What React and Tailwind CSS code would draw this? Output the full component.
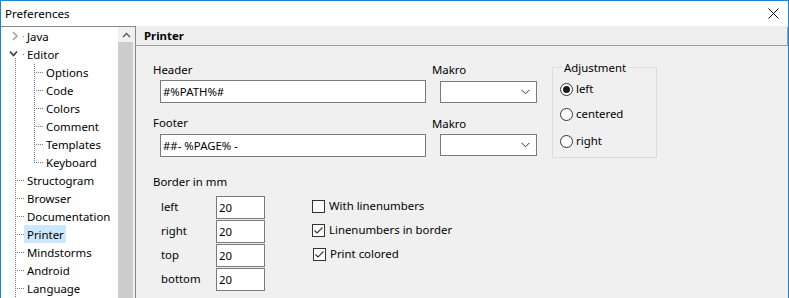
import React from "react";

const DOT = "#7a7a7a";

function dotsV(x, y1, y2, k) {
  const r = [];
  for (let y = y1; y <= y2; y += 2) r.push(<rect key={k + "v" + y} x={x} y={y} width="1" height="1" />);
  return r;
}
function dotsH(y, x1, x2, k) {
  const r = [];
  for (let x = x1; x <= x2; x += 2) r.push(<rect key={k + "h" + x} x={x} y={y} width="1" height="1" />);
  return r;
}

function TreeRow({ kind, label, selected }) {
  const child = kind === "child" || kind === "childLast";
  const w = child ? 42 : 23;
  let parts = [];
  if (kind === "java") {
    parts.push(<rect key="d" x={22} y={9} width="1" height="1" />);
  } else if (kind === "editor") {
    parts.push(<rect key="d" x={22} y={9} width="1" height="1" />);
    parts.push(...dotsV(14, 13, 17, "e"));
  } else if (kind === "top") {
    parts.push(...dotsV(14, 1, 17, "t"));
    parts.push(...dotsH(9, 16, 22, "t"));
  } else if (kind === "child") {
    parts.push(...dotsV(14, 1, 17, "c"));
    parts.push(...dotsV(33, 1, 17, "c2"));
    parts.push(...dotsH(9, 35, 41, "c"));
  } else if (kind === "childLast") {
    parts.push(...dotsV(14, 1, 17, "c"));
    parts.push(...dotsV(33, 1, 9, "c2"));
    parts.push(...dotsH(9, 35, 41, "c"));
  }
  return (
    <div className="flex h-[18px] items-center">
      <svg width={w} height="18" className="shrink-0" fill={DOT}>
        {parts}
        {kind === "java" && (
          <polyline points="12,5 16,9 12,13" fill="none" stroke="#a6a6a6" strokeWidth="1.7" />
        )}
        {kind === "editor" && (
          <polyline points="9,6.5 12.5,10.5 16,6.5" fill="none" stroke="#404040" strokeWidth="1.7" />
        )}
      </svg>
      <span
        className={
          "h-[18px] leading-[19px] pl-[3px] pr-[2px] text-black " +
          (selected ? "bg-[#cce8ff]" : "")
        }
      >
        {label}
      </span>
    </div>
  );
}

function TextBox({ value, className }) {
  return (
    <div
      className={
        "bg-white border border-[#7a7a7a] flex items-center pl-[2px] text-black leading-[16px] " + className
      }
    >
      {value}
    </div>
  );
}

function Select({ className }) {
  return (
    <div className={"bg-white border border-[#7a7a7a] flex items-center justify-end pr-[6px] " + className}>
      <svg width="9" height="6" viewBox="0 0 9 6">
        <polyline points="0.5,0.8 4.5,4.8 8.5,0.8" fill="none" stroke="#333" strokeWidth="1" />
      </svg>
    </div>
  );
}

function Radio({ checked, label, className }) {
  return (
    <div className={"flex items-center h-[16px] " + className}>
      <div className="w-[13px] h-[13px] rounded-full border border-[#333] bg-white flex items-center justify-center">
        {checked && <div className="w-[7px] h-[7px] rounded-full bg-[#1a1a1a]" />}
      </div>
      <span className="ml-[3px] leading-[16px]">{label}</span>
    </div>
  );
}

function Check({ checked, label, className }) {
  return (
    <div className={"flex items-center h-[24px] " + className}>
      <div className="w-[13px] h-[13px] border border-[#333] bg-white flex items-center justify-center">
        {checked && (
          <svg width="11" height="11" viewBox="0 0 11 11">
            <polyline points="1.5,5.5 4,8 9.5,2.5" fill="none" stroke="#333" strokeWidth="1.1" />
          </svg>
        )}
      </div>
      <span className="ml-[4px] leading-[16px]">{label}</span>
    </div>
  );
}

export default function App() {
  const rows = [
    ["java", "Java"],
    ["editor", "Editor"],
    ["child", "Options"],
    ["child", "Code"],
    ["child", "Colors"],
    ["child", "Comment"],
    ["child", "Templates"],
    ["childLast", "Keyboard"],
    ["top", "Structogram"],
    ["top", "Browser"],
    ["top", "Documentation"],
    ["top", "Printer", true],
    ["top", "Mindstorms"],
    ["top", "Android"],
    ["top", "Language"],
  ];
  return (
    <div
      className="w-[789px] h-[298px] overflow-hidden border-l border-t border-r border-[#1883d7] bg-[#f0f0f0] flex flex-col text-[11.4px] text-black"
      style={{ fontFamily: '"Noto Sans", "Liberation Sans", sans-serif' }}
    >
      {/* Title bar */}
      <div className="h-[25px] shrink-0 bg-white flex items-center justify-between pl-[4px] pr-[9px]">
        <span className="leading-[16px] text-[11.6px]">Preferences</span>
        <svg width="11" height="11" viewBox="0 0 11 11">
          <path d="M0.5 0.5 L10.5 10.5 M10.5 0.5 L0.5 10.5" stroke="#111" strokeWidth="1" />
        </svg>
      </div>
      {/* Body */}
      <div className="flex flex-1 min-h-0">
        {/* Tree */}
        <div className="w-[135px] shrink-0 border-t border-r border-[#828790] flex overflow-hidden">
          <div className="w-[117px] bg-white overflow-hidden">
            {rows.map(([k, l, s]) => (
              <TreeRow key={l} kind={k} label={l} selected={s} />
            ))}
          </div>
          <div className="w-[17px] bg-[#f0f0f0] flex flex-col">
            <div className="h-[15px] flex items-center justify-center">
              <svg width="9" height="6" viewBox="0 0 9 6">
                <polyline points="1,5 4.5,1.5 8,5" fill="none" stroke="#606060" strokeWidth="1.5" />
              </svg>
            </div>
            <div className="flex-1 ml-[0px] w-[15px] bg-[#cdcdcd]" />
          </div>
        </div>
        {/* Right panel */}
        <div className="flex-1 pt-[1px] flex flex-col">
          <div className="h-[19px] bg-[#eeeeee] border-b border-r border-[#a0a0a0] flex items-center pl-[8px] font-bold leading-[16px]">
            Printer
          </div>
          <div className="pl-[17px]">
            <div className="flex items-start">
              <div className="w-[273px] flex flex-col">
                <div className="mt-[16px] h-[16px] leading-[16px]">Header</div>
                <TextBox value="#%PATH%#" className="mt-[2px] ml-[7px] w-[266px] h-[23px]" />
                <div className="mt-[12px] h-[16px] leading-[16px]">Footer</div>
                <TextBox value="##- %PAGE% -" className="mt-[3px] ml-[7px] w-[266px] h-[23px]" />
              </div>
              <div className="ml-[6px] w-[105px] flex flex-col">
                <div className="mt-[16px] h-[16px] leading-[16px]">Makro</div>
                <Select className="mt-[3px] ml-[8px] w-[97px] h-[22px]" />
                <div className="mt-[13px] h-[16px] leading-[16px]">Makro</div>
                <Select className="mt-[2px] ml-[8px] w-[97px] h-[22px]" />
              </div>
              <div className="ml-[15px] mt-[21px] w-[105px] h-[91px] border border-[#dcdcdc] flex flex-col">
                <span className="-mt-[8px] ml-[9px] w-fit px-[2px] bg-[#f0f0f0] h-[16px] leading-[16px]">
                  Adjustment
                </span>
                <Radio checked label="left" className="mt-[5px] ml-[7px]" />
                <Radio label="centered" className="mt-[9px] ml-[7px]" />
                <Radio label="right" className="mt-[11px] ml-[7px]" />
              </div>
            </div>
            <div className="mt-[16px] h-[16px] leading-[16px]">Border in mm</div>
            <div className="mt-[6px] flex items-start">
              <div className="flex flex-col gap-[1px]">
                {["left", "right", "top", "bottom"].map((l) => (
                  <div key={l} className="flex items-center h-[23px]">
                    <div className="w-[63px] pl-[8px] leading-[16px] -mt-[2px]">{l}</div>
                    <TextBox value="20" className="w-[49px] h-[23px]" />
                  </div>
                ))}
              </div>
              <div className="ml-[47px] -mt-[2px] flex flex-col">
                <Check label="With linenumbers" />
                <Check checked label="Linenumbers in border" />
                <Check checked label="Print colored" className="ml-[1px]" />
              </div>
            </div>
          </div>
        </div>
      </div>
    </div>
  );
}
